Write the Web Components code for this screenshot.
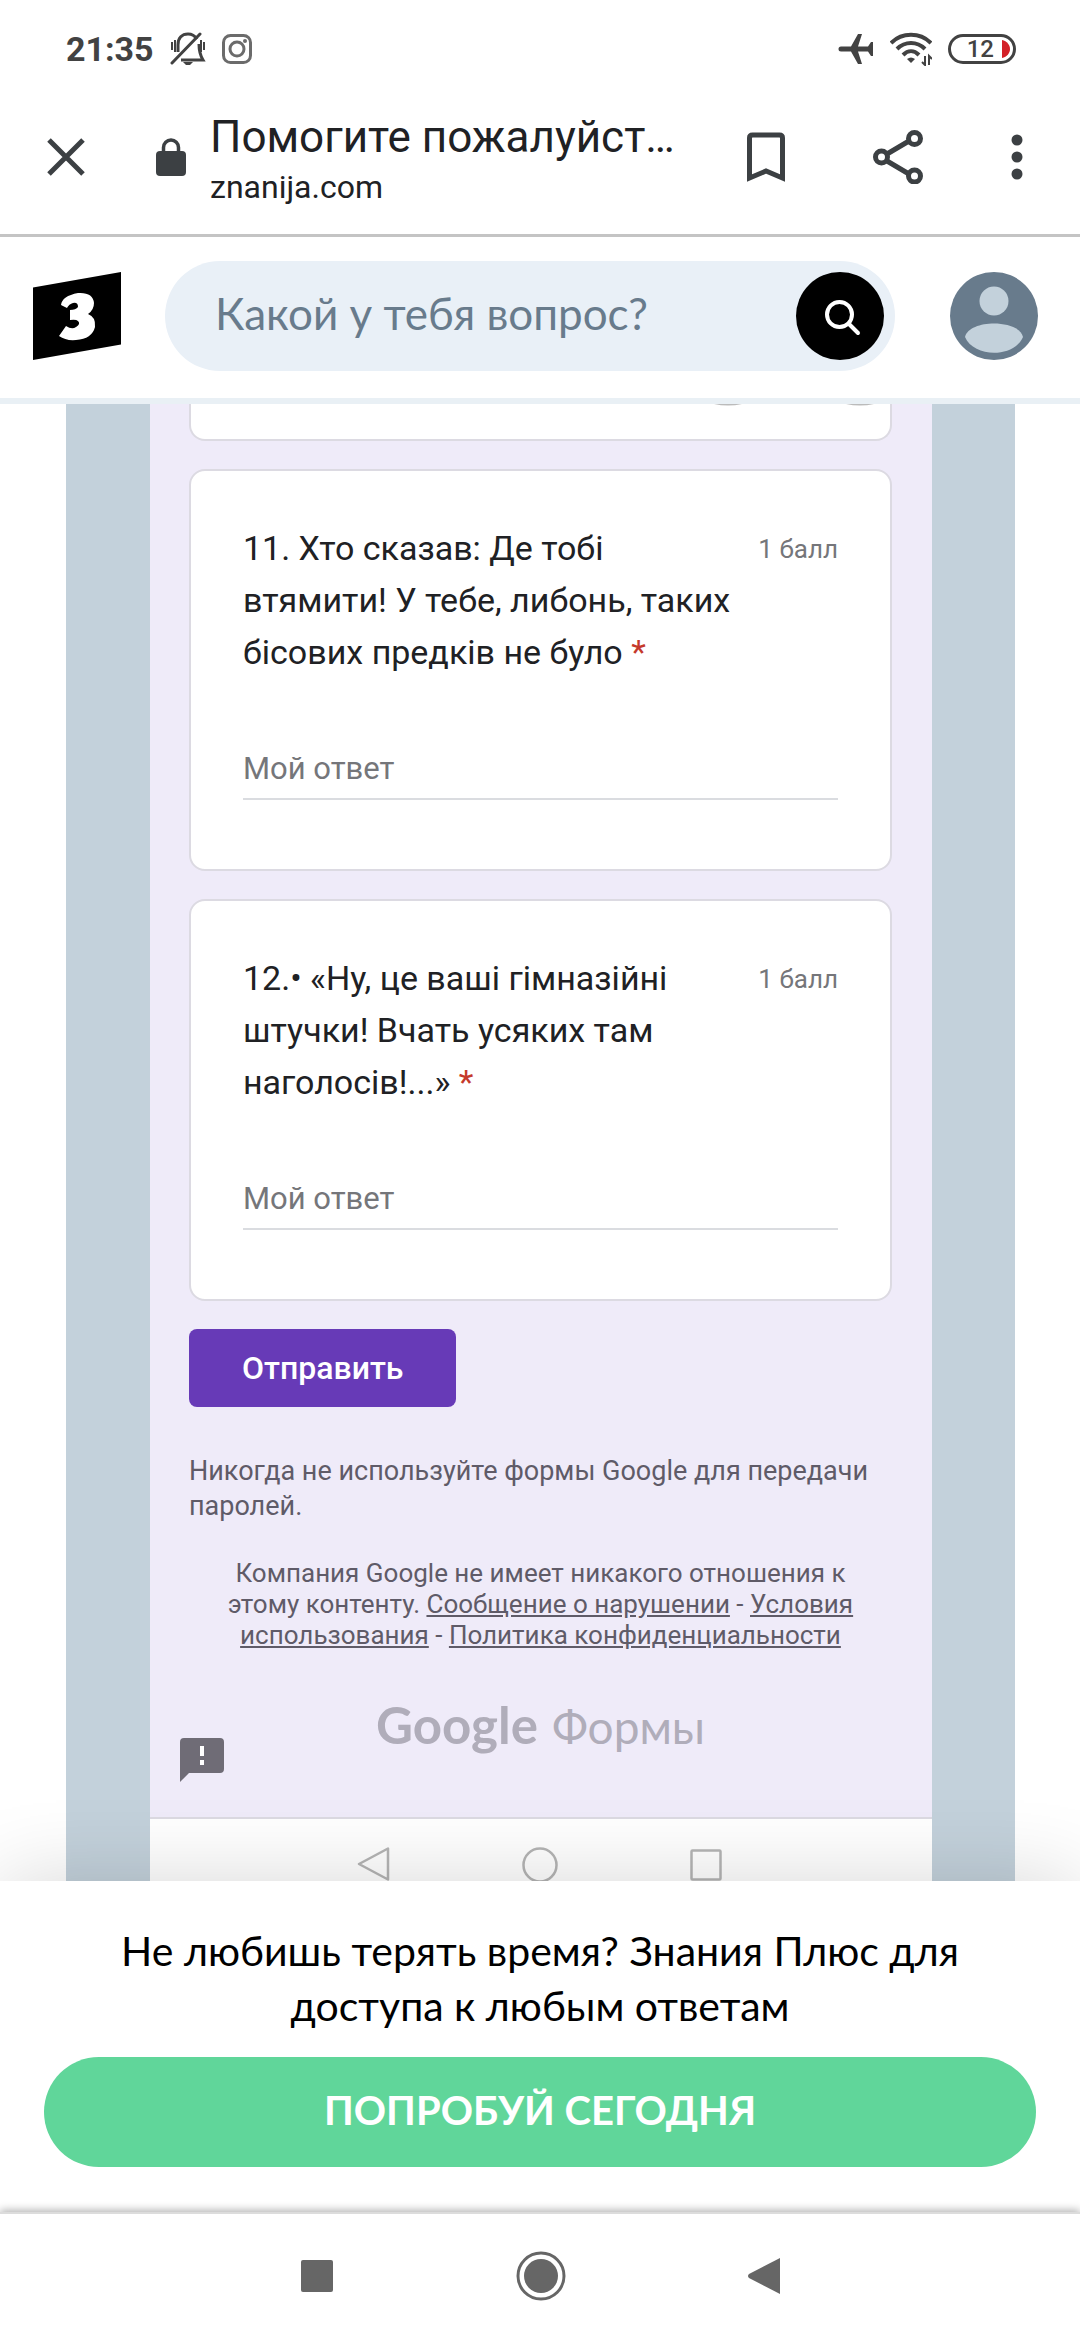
<!DOCTYPE html>
<html lang="ru">
<head>
<meta charset="utf-8">
<meta name="viewport" content="width=device-width, initial-scale=1">
<title>Помогите пожалуйста</title>
<style>
  body {
    margin: 0;
    min-height: 100vh;
    display: flex;
    flex-direction: column;
    background: #fff;
    font-family: Roboto, "Noto Sans", sans-serif;
    color: #202124;
    --brand-font: Lato, "Open Sans", sans-serif;
  }

  photo-viewer {
    flex: 1;
  }
</style>
</head>
<body>
<status-bar time="21:35" battery="12"></status-bar>
<browser-toolbar>
  <span slot="title">Помогите пожалуйст…</span>
  <span slot="host">znanija.com</span>
</browser-toolbar>
<site-header></site-header>
<photo-viewer>
  <form-card cut></form-card>
  <question-card points="1 балл" field="q11">11. Хто сказав: Де тобі<br>втямити! У тебе, либонь, таких<br>бісових предків не було</question-card>
  <question-card points="1 балл" field="q12">12.• «Ну, це ваші гімназійні<br>штучки! Вчать усяких там<br>наголосів!...»</question-card>
  <form-footer></form-footer>
  <photo-nav slot="nav"></photo-nav>
</photo-viewer>
<promo-panel>
  <span slot="text">Не любишь терять время? Знания Плюс для<br>доступа к любым ответам</span>
  <span slot="action">ПОПРОБУЙ СЕГОДНЯ</span>
</promo-panel>
<system-nav></system-nav>

<script>
class StatusBar extends HTMLElement {
  constructor() {
    super();
    this.attachShadow({ mode: 'open' });
  }

  connectedCallback() {
    this.shadowRoot.innerHTML = `
      <style>
        :host {
          display: flex;
          align-items: center;
          justify-content: space-between;
          box-sizing: border-box;
          height: 98px;
          padding: 0 64px 0 66px;
          color: #424242;
        }

        .group {
          display: flex;
          align-items: center;
          gap: 16px;
        }

        .time {
          font-size: 34px;
          line-height: 40px;
          font-weight: 700;
        }

        .battery {
          box-sizing: border-box;
          display: flex;
          align-items: center;
          justify-content: flex-end;
          gap: 8px;
          width: 68px;
          height: 30px;
          padding-right: 3px;
          border: 3px solid #424242;
          border-radius: 15px;
          font-size: 24px;
          line-height: 24px;
          font-weight: 500;
        }

        svg {
          display: block;
        }
      </style>
      <div class="group">
        <span class="time">${this.getAttribute('time')}</span>
        <svg width="36" height="34" viewBox="0 0 36 34" fill="none" stroke="#424242" stroke-width="3">
          <path d="M8 20V13C8 6 12 2 18 2c4 0 7 2 9 5M29 12c0 8 1 11 4 16H11"/>
          <path d="M30 2 2 31" stroke-linecap="round"/>
          <path d="M2 10v8M5 8v12M31 8v12M34 10v8" stroke-width="2"/>
          <path d="M13 30h10l-3 3h-4z" fill="#424242" stroke="none"/>
        </svg>
        <svg width="30" height="30" viewBox="0 0 30 30" fill="none" stroke="#6b6b6b" stroke-width="3">
          <rect x="1.500" y="1.500" width="27" height="27" rx="7"/>
          <circle cx="15" cy="15" r="7"/>
          <circle cx="23" cy="7" r="2" fill="#6b6b6b" stroke="none"/>
        </svg>
      </div>
      <div class="group">
        <svg width="36" height="30" viewBox="0 0 36 30" fill="#424242">
          <path d="M3 12.500H13L20 0h4l-4 12.500h10L33 8h2v14h-2l-3-4.500H20L24 30h-4l-7-12.500H3a2.500 2.500 0 0 1 0-5z"/>
        </svg>
        <svg width="42" height="34" viewBox="0 0 42 34" fill="none" stroke="#424242" stroke-width="4">
          <path d="M1 11c11-11 29-11 40 0M7 17c8-8 20-8 28 0M13 23c5-5 11-5 16 0"/>
          <path d="M17 27q4-3 8 0l-4 4z" fill="#424242" stroke="none"/>
          <path d="M35 24v9l-3-3M39 33v-9l3 3" stroke-width="2"/>
        </svg>
        <div class="battery">
          <span>${this.getAttribute('battery')}</span>
          <svg width="8" height="18" viewBox="0 0 8 18"><path d="M0 0c5 1 8 5 8 9s-3 8-8 9z" fill="#d32027"/></svg>
        </div>
      </div>
    `;
  }
}

class BrowserToolbar extends HTMLElement {
  constructor() {
    super();
    this.attachShadow({ mode: 'open' });
    this.shadowRoot.innerHTML = `
      <style>
        :host {
          display: flex;
          align-items: center;
          box-sizing: border-box;
          height: 139px;
          padding: 0 57px 18px 46px;
          border-bottom: 3px solid #c4c4c4;
          color: #202124;
        }

        button {
          display: block;
          padding: 0;
          border: 0;
          background: none;
        }

        svg {
          display: block;
        }

        .lock {
          margin: 0 24px 0 70px;
        }

        .page {
          flex: 1;
          min-width: 0;
          padding-top: 8px;
        }

        .title {
          font-size: 44px;
          line-height: 52px;
          white-space: nowrap;
        }

        .host {
          font-size: 32px;
          line-height: 48px;
        }

        .actions {
          display: flex;
          align-items: center;
          gap: 88px;
        }
      </style>
      <button aria-label="Закрыть">
        <svg width="40" height="40" viewBox="0 0 40 40" stroke="#3c4043" stroke-width="5"><path d="M3 3l34 34M37 3 3 37"/></svg>
      </button>
      <svg class="lock" width="30" height="38" viewBox="0 0 30 38">
        <path d="M7.500 15V9.500a7.500 7.500 0 0 1 15 0V15" fill="none" stroke="#3c4043" stroke-width="3.500"/>
        <rect y="13" width="30" height="25" rx="4" fill="#3c4043"/>
      </svg>
      <div class="page">
        <div class="title"><slot name="title"></slot></div>
        <div class="host"><slot name="host"></slot></div>
      </div>
      <div class="actions">
        <button aria-label="В закладки">
          <svg width="38" height="50" viewBox="0 0 38 50" fill="none" stroke="#3c4043" stroke-width="5">
            <path d="M2.500 46V6q0-3 3-3h27q3 0 3 3v40L19 39z"/>
          </svg>
        </button>
        <button aria-label="Поделиться">
          <svg width="50" height="54" viewBox="0 0 50 54" fill="none" stroke="#3c4043" stroke-width="5">
            <path d="M14 24 36 11M14 31l22 13"/>
            <circle cx="8.500" cy="27" r="6"/><circle cx="41.500" cy="8.500" r="6"/><circle cx="41.500" cy="46" r="6"/>
          </svg>
        </button>
        <button aria-label="Меню">
          <svg width="12" height="46" viewBox="0 0 12 46" fill="#3c4043">
            <circle cx="6" cy="6" r="5.500"/><circle cx="6" cy="23" r="5.500"/><circle cx="6" cy="40" r="5.500"/>
          </svg>
        </button>
      </div>
    `;
  }
}

class SiteHeader extends HTMLElement {
  constructor() {
    super();
    this.attachShadow({ mode: 'open' });
    this.shadowRoot.innerHTML = `
      <style>
        :host {
          display: flex;
          align-items: center;
          box-sizing: border-box;
          height: 167px;
          padding: 0 42px 4px 33px;
          border-bottom: 6px solid #e9f0f5;
          font-family: var(--brand-font);
        }

        svg {
          display: block;
        }

        .search {
          flex: 1;
          display: flex;
          align-items: center;
          box-sizing: border-box;
          height: 110px;
          margin: 0 55px 0 44px;
          padding: 0 11px 0 50px;
          border-radius: 55px;
          background: #e9f0f7;
        }

        input {
          flex: 1;
          min-width: 0;
          height: 60px;
          padding: 0 0 6px;
          border: 0;
          outline: 0;
          background: none;
          font: 400 44px/54px var(--brand-font);
          color: #000;
        }

        input::placeholder {
          color: #687b8c;
          opacity: 1;
        }

        button {
          display: block;
          padding: 0;
          border: 0;
          border-radius: 50%;
          background: #000;
        }

        .profile {
          background: #687b8c;
        }
      </style>
      <a href="#" aria-label="Знания">
        <svg width="88" height="88" viewBox="0 0 88 88">
          <path d="M0 15.500 88 0v72.500L0 88z"/>
          <path d="M28 33q1-9 17-12 15-1 16 10 0 7-6 11 8 3 7 13-3 12-19 13-10 1-17-4l7-10q6 4 10 1 5-3 2-6-2-2-8-1V38q6 0 8-3 0-5-5-4-4 1-6 5z" fill="#fff"/>
        </svg>
      </a>
      <div class="search">
        <input type="text" aria-label="Поиск" placeholder="Какой у тебя вопрос?">
        <button aria-label="Искать">
          <svg width="88" height="88" viewBox="0 0 88 88" fill="none" stroke="#fff" stroke-width="4" stroke-linecap="round">
            <circle cx="43.500" cy="42.500" r="12.500"/><path d="M53 52l9 9"/>
          </svg>
        </button>
      </div>
      <button class="profile" aria-label="Профиль">
        <svg width="88" height="88" viewBox="0 0 88 88" fill="#c3d1db">
          <circle cx="44" cy="29" r="14.500"/>
          <path d="M15 65c4-18 54-18 58 0-9 21-49 21-58 0z"/>
        </svg>
      </button>
    `;
  }
}

class PhotoViewer extends HTMLElement {
  constructor() {
    super();
    this.attachShadow({ mode: 'open' });
    this.shadowRoot.innerHTML = `
      <style>
        :host {
          display: flex;
          flex-direction: column;
          min-height: 0;
          margin: 0 65px 0 66px;
          padding: 0 83px 0 84px;
          overflow: hidden;
          background: #c3d1db;
        }

        .form {
          flex: 1;
          display: flex;
          flex-direction: column;
          gap: 28px;
          padding: 0 40px 0 39px;
          background: #efebf9;
        }
      </style>
      <div class="form"><slot></slot></div>
      <slot name="nav"></slot>
    `;
  }
}

class FormCard extends HTMLElement {
  constructor() {
    super();
    this.attachShadow({ mode: 'open' });
    this.shadowRoot.innerHTML = `
      <style>
        :host {
          display: block;
          box-sizing: border-box;
          border: 2px solid #dcdae2;
          border-radius: 16px;
          background: #fff;
        }

        .rest {
          display: none;
        }

        /* only the lower edge of the card is in view */
        :host([cut]) {
          height: 37px;
          border-top: 0;
          border-top-left-radius: 0;
          border-top-right-radius: 0;
        }

        :host([cut]) .rest {
          display: flex;
          justify-content: flex-end;
          gap: 104px;
          padding-right: 16px;
        }
      </style>
      <div class="rest">
        <svg width="28" height="2" viewBox="0 0 28 2"><path d="M0 0q14 3 28 0z" fill="#bbb"/></svg>
        <svg width="28" height="2" viewBox="0 0 28 2"><path d="M0 0q14 3 28 0z" fill="#bbb"/></svg>
      </div>
      <slot></slot>
    `;
  }
}

class QuestionCard extends HTMLElement {
  constructor() {
    super();
    this.attachShadow({ mode: 'open' });
  }

  connectedCallback() {
    const field = this.getAttribute('field');

    this.shadowRoot.innerHTML = `
      <style>
        :host {
          display: block;
        }

        .body {
          padding: 51px 52px 69px;
        }

        .head {
          display: flex;
          justify-content: space-between;
          align-items: flex-start;
          white-space: nowrap;
        }

        label {
          font-size: 34px;
          line-height: 52px;
        }

        .required {
          color: #c5392b;
        }

        .points {
          font-size: 26px;
          line-height: 54px;
          color: #75767a;
        }

        input {
          display: block;
          box-sizing: border-box;
          width: 100%;
          height: 62px;
          margin-top: 60px;
          padding: 0;
          border: 0;
          border-bottom: 2px solid #dadce0;
          outline: 0;
          background: none;
          font: 400 31px/60px Roboto, sans-serif;
          color: #202124;
        }

        input::placeholder {
          color: #75767a;
          opacity: 1;
        }
      </style>
      <form-card>
        <div class="body">
          <div class="head">
            <label for="${field}"><slot></slot> <span class="required">*</span></label>
            <span class="points">${this.getAttribute('points')}</span>
          </div>
          <input type="text" id="${field}" placeholder="Мой ответ">
        </div>
      </form-card>
    `;
  }
}

class FormFooter extends HTMLElement {
  constructor() {
    super();
    this.attachShadow({ mode: 'open' });
    this.shadowRoot.innerHTML = `
      <style>
        :host {
          display: block;
          color: #5f5b68;
        }

        .submit {
          display: block;
          height: 78px;
          padding: 0 53px;
          border: 0;
          border-radius: 8px;
          background: #673ab7;
          color: #fff;
          font: 500 32px/78px Roboto, sans-serif;
        }

        p {
          margin: 0;
          white-space: nowrap;
        }

        .warning {
          margin-top: 47px;
          font-size: 27px;
          line-height: 35px;
        }

        .legal {
          margin-top: 34px;
          font-size: 26px;
          line-height: 31px;
          text-align: center;
        }

        a {
          color: inherit;
        }

        .logo {
          display: flex;
          align-items: baseline;
          justify-content: center;
          gap: 14px;
          margin-top: 38px;
          font: 400 46px/72px var(--brand-font);
          color: #b0adba;
        }

        .logo b {
          font-size: 51px;
          font-weight: 700;
        }

        .report {
          display: block;
          margin: -25px 0 0 -9px;
          padding: 0;
          border: 0;
          background: none;
        }

        svg {
          display: block;
        }
      </style>
      <button class="submit">Отправить</button>
      <p class="warning">Никогда не используйте формы Google для передачи<br>паролей.</p>
      <p class="legal">Компания Google не имеет никакого отношения к<br>этому контенту. <a href="#">Сообщение о нарушении</a> - <a href="#">Условия<br>использования</a> - <a href="#">Политика конфиденциальности</a></p>
      <div class="logo"><b>Google</b><span>Формы</span></div>
      <button class="report" aria-label="Сообщить о проблеме">
        <svg width="44" height="44" viewBox="0 0 44 44">
          <path d="M4 0h36q4 0 4 4v27q0 4-4 4H9l-9 9V4q0-4 4-4z" fill="#6f6c76"/>
          <path d="M20 8h4v10h-4zM20 22h4v5h-4z" fill="#fff"/>
        </svg>
      </button>
    `;
  }
}

class PhotoNav extends HTMLElement {
  constructor() {
    super();
    this.attachShadow({ mode: 'open' });
    this.shadowRoot.innerHTML = `
      <style>
        :host {
          display: flex;
          justify-content: space-between;
          align-items: flex-end;
          box-sizing: border-box;
          height: 64px;
          padding: 0 210px 0 207px;
          border-top: 2px solid #dcdae2;
          background: #fff;
        }

        svg {
          display: block;
        }
      </style>
      <svg width="33" height="34" viewBox="0 0 33 34" fill="none" stroke="#b5b5b5" stroke-width="2.500"><path d="M31 1.500v31L2 17z" stroke-linejoin="round"/></svg>
      <svg width="36" height="34" viewBox="0 0 36 34" fill="none" stroke="#b5b5b5" stroke-width="2.500"><circle cx="18" cy="18" r="16.500"/></svg>
      <svg width="32" height="32" viewBox="0 0 32 32" fill="none" stroke="#b5b5b5" stroke-width="2.500"><rect x="1.500" y="1.500" width="29" height="29" rx="1"/></svg>
    `;
  }
}

class PromoPanel extends HTMLElement {
  constructor() {
    super();
    this.attachShadow({ mode: 'open' });
    this.shadowRoot.innerHTML = `
      <style>
        :host {
          display: block;
          position: relative;
          padding: 42px 44px 45px;
          background: #fff;
          box-shadow: 0 0 80px rgba(0, 0, 0, 0.16);
          font-family: var(--brand-font);
          text-align: center;
          white-space: nowrap;
        }

        p {
          margin: 0 0 24px;
          font-size: 41px;
          line-height: 55px;
          color: #000;
        }

        button {
          display: block;
          width: 100%;
          height: 110px;
          padding: 0 0 4px;
          border: 0;
          border-radius: 55px;
          background: #60d69a;
          color: #fff;
          font: 700 40px/54px var(--brand-font);
        }
      </style>
      <p><slot name="text"></slot></p>
      <button><slot name="action"></slot></button>
    `;
  }
}

class SystemNav extends HTMLElement {
  constructor() {
    super();
    this.attachShadow({ mode: 'open' });
    this.shadowRoot.innerHTML = `
      <style>
        :host {
          display: flex;
          justify-content: center;
          align-items: center;
          gap: 182px;
          box-sizing: border-box;
          position: relative;
          height: 128px;
          padding-bottom: 2px;
          border-top: 2px solid #dcdcdc;
          background: #fff;
          box-shadow: 0 -2px 8px rgba(0, 0, 0, 0.3);
        }

        button {
          display: block;
          padding: 0;
          border: 0;
          background: none;
        }

        svg {
          display: block;
        }
      </style>
      <button aria-label="Недавние"><svg width="34" height="34" viewBox="0 0 34 34"><rect x="1" y="1" width="32" height="32" rx="2" fill="#666"/></svg></button>
      <button aria-label="Домой"><svg width="50" height="50" viewBox="0 0 50 50" fill="#666"><circle cx="25" cy="25" r="23" fill="none" stroke="#666" stroke-width="3"/><circle cx="25" cy="25" r="17"/></svg></button>
      <button aria-label="Назад"><svg width="32" height="38" viewBox="0 0 32 38" fill="#666"><path d="M32 1v36L1 21q-2-2 0-4z"/></svg></button>
    `;
  }
}

customElements.define('status-bar', StatusBar);
customElements.define('browser-toolbar', BrowserToolbar);
customElements.define('site-header', SiteHeader);
customElements.define('form-card', FormCard);
customElements.define('question-card', QuestionCard);
customElements.define('form-footer', FormFooter);
customElements.define('photo-nav', PhotoNav);
customElements.define('photo-viewer', PhotoViewer);
customElements.define('promo-panel', PromoPanel);
customElements.define('system-nav', SystemNav);
</script>
</body>
</html>
